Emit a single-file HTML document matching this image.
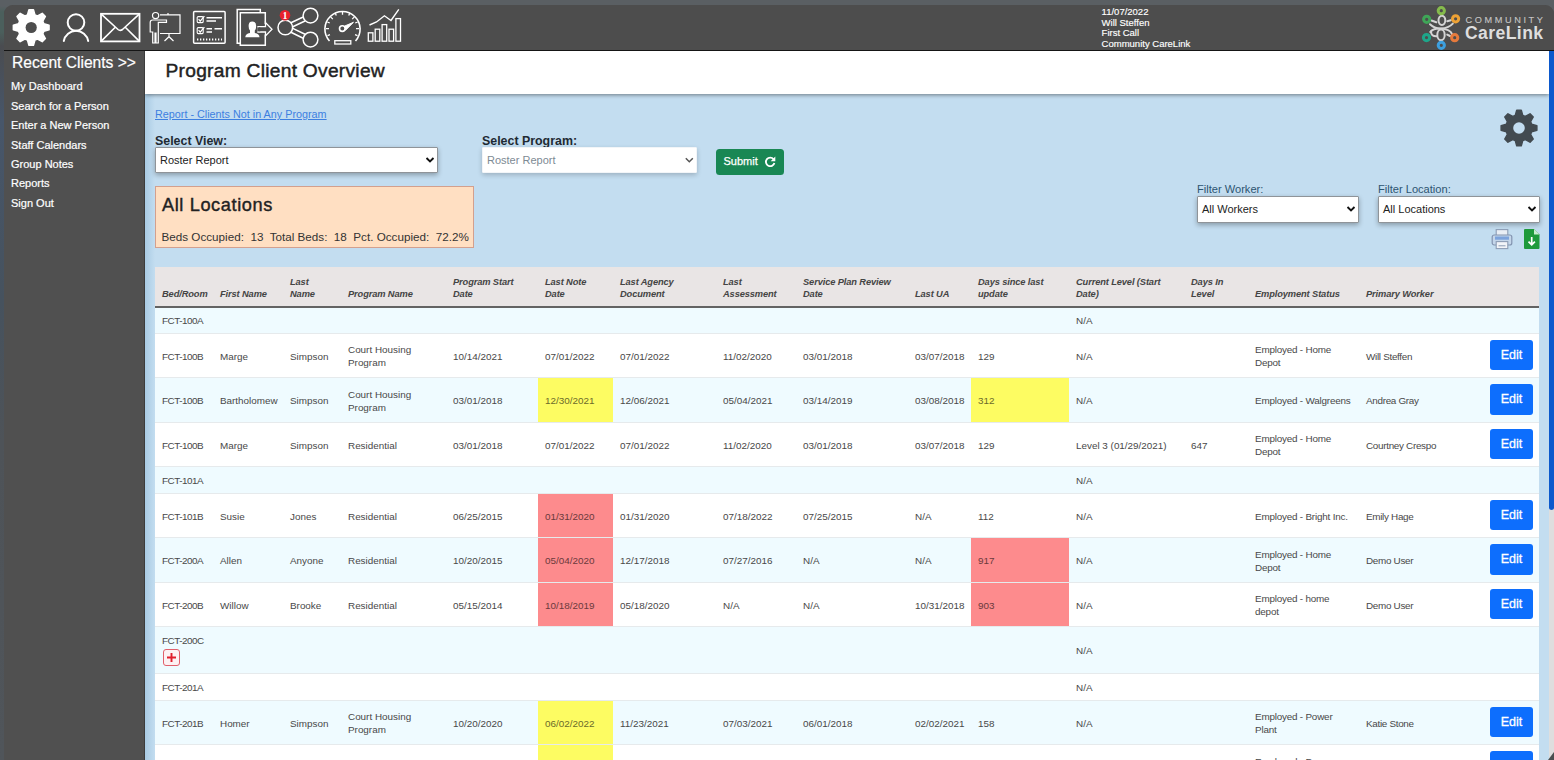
<!DOCTYPE html>
<html lang="en"><head><meta charset="utf-8"><title>Program Client Overview</title>
<style>
*{box-sizing:border-box;margin:0;padding:0}
html,body{width:1554px;height:760px;overflow:hidden}
body{background:#5a5f63;font-family:"Liberation Sans",sans-serif;position:relative}
.desk-l{position:absolute;left:0;top:0;width:6px;height:760px;background:linear-gradient(#5a5f63 0,#5a5f63 6px,#4b5f5c 12px,#4b5f5c 32px,#4a4c50 46px,#47566a 120px,#46525e 300px,#4e5358 440px,#50555a 760px)}
.win{position:absolute;left:4px;top:5px;width:1550px;height:755px;background:#4f4f4f;border-radius:9px 9px 0 0;overflow:hidden}
.topbar{position:absolute;left:0;top:0;width:1550px;height:46px;background:#4d4d4d;border-bottom:1.5px solid #151515}
.topbar svg{position:absolute;left:0;top:0}
.info{position:absolute;left:1097.6px;top:2.3px;-webkit-text-stroke:.15px #fff;color:#fff;font-size:9.5px;line-height:10.5px;white-space:nowrap}
.logo-c{position:absolute;left:1461.5px;top:9.7px;font-size:9.2px;letter-spacing:2.6px;color:#c6c6c6;-webkit-text-stroke:.1px #c6c6c6;white-space:nowrap}
.logo-l{position:absolute;left:1461px;top:18.3px;font-size:17.6px;font-weight:bold;color:#dedede;letter-spacing:.4px;white-space:nowrap}
.side{position:absolute;left:0;top:46px;width:141px;height:709px;background:#505050;border-right:1px solid #3c3c3c;color:#fff}
.side h3{-webkit-text-stroke:.2px #fff;position:absolute;left:8px;top:2.3px;font-size:15.6px;font-weight:normal;line-height:20px;white-space:nowrap}
.side ul{list-style:none;position:absolute;left:7px;top:26px}
.side li{-webkit-text-stroke:.2px #fff;position:relative;top:.4px;font-size:11px;height:19.4px;line-height:19.4px;white-space:nowrap}
.main{position:absolute;left:141px;top:46px;width:1409px;height:709px;background:#c3ddf0;overflow:hidden}
.main:before{content:"";position:absolute;left:0;top:0;width:10px;height:100%;background:linear-gradient(90deg,#a9cbe4,#c3ddf0)}
.hdr{position:absolute;left:0;top:0;width:1404px;height:43px;background:#fff;box-shadow:0 1px 4px rgba(0,0,0,.45)}
.hdr h1{letter-spacing:.27px;position:absolute;left:20.5px;top:7.5px;font-size:19.2px;font-weight:normal;-webkit-text-stroke:.45px #222;color:#222;white-space:nowrap;line-height:24px}
.sb{position:absolute;left:1404px;top:0;width:5px;height:709px;background:#dedede}
.sb i{position:absolute;left:0;top:0;width:5px;height:459px;background:#0c59cc;border-radius:0 0 3px 3px}
a.rep{position:absolute;left:10px;top:56.3px;font-size:10.8px;color:#3d7fe0;text-decoration:underline;white-space:nowrap;line-height:14px}
.lbl{position:absolute;font-size:12.4px;font-weight:bold;color:#1f2a33;white-space:nowrap;line-height:14px}
.sel{position:absolute;height:26px;background:#fff;border:1px solid #8f9499;border-radius:1px;box-shadow:0 2px 5px rgba(0,0,0,.3);font-size:11px;line-height:24px;padding-left:4px;color:#222;white-space:nowrap;text-indent:0}
.sel svg{position:absolute;right:2.5px;top:8px}
.submit{position:absolute;left:571px;top:98px;width:67.5px;height:25.5px;background:#198754;border-radius:3.5px;color:#fff;font-size:11px;line-height:25.5px;padding-left:7.5px;white-space:nowrap;-webkit-text-stroke:.25px #fff}
.submit svg{position:absolute;left:48px;top:6.5px}
.loc{position:absolute;left:10px;top:135px;width:319px;height:62px;background:#ffdfc2;border:1px solid #d3a08e}
.loc b{position:absolute;left:6px;top:6px;font-size:18.2px;font-weight:normal;-webkit-text-stroke:.4px #222;letter-spacing:.6px;color:#222;white-space:nowrap;line-height:24px}
.loc span{position:absolute;left:5.500px;top:42.5px;font-size:11.68px;color:#333;white-space:pre;line-height:14px}
.flbl{position:absolute;font-size:11.1px;color:#2d5470;white-space:nowrap;line-height:13px}
.grid{position:absolute;left:10px;top:216px;width:1384px;border-collapse:collapse;table-layout:fixed;font-size:9.9px;color:#484848;background:#fff}
.grid th{background:#e9e5e5;height:39.5px;vertical-align:bottom;text-align:left;padding:0 0 4.5px 7px;letter-spacing:-.12px;font-style:italic;font-weight:bold;color:#444;line-height:12.7px;border-bottom:2px solid #636363;font-size:9.3px;white-space:nowrap}
.grid td{padding:3.5px 0 0 7px;vertical-align:middle;line-height:12.7px;border-top:1px solid #e6eaec;white-space:nowrap;overflow:hidden}
.grid tr.s td{height:26.5px}
.grid tr.b td{height:44.5px}
.grid tr.p td{height:47px}
.grid tr.alt td{background:#effbff}
.grid td.y{background:#fdfc62 !important;color:#6b6a2a}
.grid td.r{background:#fd8b8d !important;color:#6a3a3c}
.edit{display:block;margin-top:-1px;-webkit-text-stroke:.3px #fff;width:43px;height:30.5px;background:#0d6efd;color:#fff;border-radius:3px;font-size:12.5px;line-height:30px;text-align:center}
.plus{display:block;margin:1px 0 0 1px}
.grid td:first-child{letter-spacing:-.5px}
.grid td:nth-child(15){letter-spacing:-.3px}
.grid td:nth-child(14){letter-spacing:-.2px}
.grid td:last-child{padding-top:0}
.grid tr.p td:first-child{vertical-align:top;padding-top:7.9px}

</style></head><body>
<div class="desk-l"></div>
<div class="win">
<div class="topbar">
<svg width="420" height="46" viewBox="4 5 420 46" fill="none" stroke="#fff" stroke-width="2">
<!-- gear -->
<g transform="translate(31.2,27.5)"><path d="M-3.68 -12.68 L-2.26 -17.86 L2.26 -17.86 L3.68 -12.68 L6.36 -11.57 L11.03 -14.22 L14.22 -11.03 L11.57 -6.36 L12.68 -3.68 L17.86 -2.26 L17.86 2.26 L12.68 3.68 L11.57 6.36 L14.22 11.03 L11.03 14.22 L6.36 11.57 L3.68 12.68 L2.26 17.86 L-2.26 17.86 L-3.68 12.68 L-6.36 11.57 L-11.03 14.22 L-14.22 11.03 L-11.57 6.36 L-12.68 3.68 L-17.86 2.26 L-17.86 -2.26 L-12.68 -3.68 L-11.57 -6.36 L-14.22 -11.03 L-11.03 -14.22 L-6.36 -11.57Z" fill="#fff" stroke="#fff" stroke-width="1.5" stroke-linejoin="round"/><circle r="5.6" fill="#4d4d4d" stroke="none"/></g>
<!-- person -->
<circle cx="76" cy="22.5" r="8.3"/><path d="M63.8 41 A12.4 12.4 0 0 1 88.2 41" stroke-linecap="round"/>
<!-- envelope -->
<rect x="101" y="13.8" width="38.5" height="27.6" stroke-width="1.8"/><path d="M101 13.8 L118 29.5 Q120.2 31.3 122.5 29.5 L139.5 13.8 M101 41.4 L115.5 27 M139.5 41.4 L125 27" stroke-width="1.6"/>
<!-- presenter -->
<g stroke-width="1.2"><circle cx="155.6" cy="15.600" r="3.1"/><path d="M150.2 32 V22.5 Q150.2 20 152.6 20 H166.5 V22.3 H158.3 V43 H156 V33 H155 V43 H152.7 V32Z"/><path d="M160 14.8 H180 V33.5 H160 M168 14.8 V13 M169 33.5 V37 M164.5 41 L169 36.7 L173.5 41"/></g>
<!-- checklist -->
<g stroke-width="1.5"><rect x="193.6" y="11.5" width="31.5" height="31.8" rx="1"/><path d="M197 39.5 H222" stroke-dasharray="1.3 1.7" stroke-width="2"/><rect x="197.2" y="16.6" width="6" height="6" rx="1" stroke-width="1.1"/><rect x="197.2" y="27.6" width="6" height="6" rx="1" stroke-width="1.1"/><path d="M198.6 19 L200.2 21.2 L204.4 16.2 M198.6 30 L200.2 32.2 L204.4 27.2" stroke-width="1.2"/><path d="M206.5 17.8 H222 M206.5 21 H216 M206.5 28.8 H212 M214.5 28.8 H222 M206.5 32 H212"/></g>
<!-- referral -->
<g stroke-width="1.5"><path d="M240.2 43.2 H237.2 V9.5 H260.3 V12.6"/><path d="M265.3 24 V12.8 H240.3 V45.3 H265.3 V34.5"/><path d="M258 26.6 H265.5 V22.6 L272 29.3 L265.5 36 V32 H258Z" stroke-width="1.3" fill="#4d4d4d"/><path d="M245.3 37.3 Q245.3 33.8 250 33 V30.6 Q248.6 28.8 248.6 26 Q248.6 21.6 252.4 21.6 Q256.2 21.6 256.2 26 Q256.2 28.8 254.8 30.6 V33 Q259.5 33.8 259.5 37.3Z" fill="#fff" stroke="none"/><rect x="257.3" y="27.4" width="3" height="3.9" fill="#4d4d4d" stroke="none"/></g>
<!-- share -->
<g stroke-width="1.5"><circle cx="285.3" cy="27.5" r="7.3"/><circle cx="310.5" cy="15.6" r="7.4"/><circle cx="310.5" cy="39.6" r="7.4"/><path d="M290.9 22.8 L303.2 17 M292.8 26.7 L305 21 M292.8 28.4 L305 34.2 M290.9 32.3 L303.2 38.2"/><circle cx="285" cy="15.3" r="5.3" fill="#e8212b" stroke="none"/></g>
<text x="282.6" y="19" font-family="Liberation Serif,serif" font-size="10" font-weight="bold" fill="#fff" stroke="none">1</text>
<!-- gauge -->
<g stroke-width="1.5"><path d="M329.5 41 A17.6 17.6 0 1 1 355.5 41" stroke-width="1.6"/><rect x="334.8" y="40.7" width="16" height="3.3" stroke-width="1.3"/><circle cx="342.3" cy="28.6" r="2.8" stroke-width="1.6"/><path d="M344.3 26.2 L353.5 22.3 L345.4 30.4" fill="#fff" stroke-width="1"/><path d="M342.5 11.5 V14.8 M326 28.6 H329 M356 28.6 H359 M330.6 16.9 L332.8 19.1 M354.4 16.9 L352.2 19.1 M335.3 13.2 L336.3 15.6 M349.7 13.2 L348.7 15.6 M327.3 22 L329.8 23 M357.7 22 L355.2 23 M327.5 35.6 L330 34.6 M357.5 35.6 L355 34.6" stroke-width="1.3"/></g>
<!-- chart -->
<g stroke-width="1.3"><rect x="368.3" y="32.8" width="4.6" height="8.4"/><rect x="375.2" y="29.2" width="4.6" height="12"/><rect x="382.1" y="24.6" width="4.6" height="16.6"/><rect x="389" y="29.2" width="4.6" height="12"/><rect x="395.9" y="18.6" width="4.6" height="22.6"/><path d="M369.5 25 L376.5 22 L384.4 15.8 L391 20.5 L398.8 9.3" stroke-width="1.4"/></g>
</svg>
<div class="info">11/07/2022<br>Will Steffen<br>First Call<br>Community CareLink</div>
<svg width="44" height="46" viewBox="1420 5 44 46" style="left:1416px" fill="none">
<g stroke="#d4d4d4" stroke-width="2" stroke-linecap="round"><ellipse cx="1441.9" cy="20.3" rx="3.4" ry="4.6"/><ellipse cx="1441" cy="34.9" rx="3.7" ry="5.3"/><path d="M1430 24.300 Q1435 29 1441 28.600 Q1448.500 28.200 1452.800 23.600"/><path d="M1431.500 20.500 L1436.300 22.300 M1447.300 21.300 L1450.800 20.300"/><path d="M1430.300 32 Q1433.500 28.300 1440 28.600 Q1450.500 29.300 1452.200 34.400"/><path d="M1431 31.500 Q1431 36.500 1436.800 36.200 M1447.200 34.600 L1450 36"/></g>
<g stroke-width="3"><circle cx="1441.3" cy="10.7" r="3.1" stroke="#85bb4c"/><circle cx="1426.7" cy="19.3" r="3.1" stroke="#3fa557"/><circle cx="1455.600" cy="18.800" r="3.1" stroke="#eea235"/><circle cx="1426.500" cy="37.600" r="3.1" stroke="#1ea68a"/><circle cx="1454.700" cy="37.700" r="3.1" stroke="#e67a3c"/><circle cx="1441.300" cy="45.300" r="3.1" stroke="#3d9fde"/></g>
</svg>
<div class="logo-c">COMMUNITY</div>
<div class="logo-l">CareLink</div>
</div>
<div class="side">
<h3>Recent Clients &gt;&gt;</h3>
<ul><li>My Dashboard</li><li>Search for a Person</li><li>Enter a New Person</li><li>Staff Calendars</li><li>Group Notes</li><li>Reports</li><li>Sign Out</li></ul>
</div>
<div class="main">
<a class="rep">Report - Clients Not in Any Program</a>
<div class="lbl" style="left:10px;top:82.5px">Select View:</div>
<div class="sel" style="left:10px;top:96px;width:283px">Roster Report<svg width="10" height="8" viewBox="0 0 10 8"><path d="M1.5 2 L5 5.500 L8.5 2" fill="none" stroke="#111" stroke-width="1.9"/></svg></div>
<div class="lbl" style="left:337px;top:82.5px">Select Program:</div>
<div class="sel" style="left:337px;top:96px;width:215px;color:#7d8a94;border-color:#f2f5f8;box-shadow:0 2px 5px rgba(0,0,0,.2)">Roster Report<svg width="10" height="8" viewBox="0 0 10 8"><path d="M1.8 2.2 L5.300 5.700 L8.8 2.2" fill="none" stroke="#555" stroke-width="1.5"/></svg></div>
<div class="submit">Submit<svg width="12" height="12" viewBox="0 0 12 12"><path d="M9.6 3.2 A4.3 4.3 0 1 0 10.4 7" fill="none" stroke="#fff" stroke-width="1.8"/><path d="M11.3 0.6 V5.2 H6.7Z" fill="#fff"/></svg></div>
<div class="loc"><b>All Locations</b><span>Beds Occupied:  13  Total Beds:  18  Pct. Occupied:  72.2%</span></div>
<svg width="40" height="40" viewBox="-20 -20 40 40" style="position:absolute;left:1354.4px;top:56.5px"><path d="M-3.68 -12.68 L-2.26 -17.86 L2.26 -17.86 L3.68 -12.68 L6.36 -11.57 L11.03 -14.22 L14.22 -11.03 L11.57 -6.36 L12.68 -3.68 L17.86 -2.26 L17.86 2.26 L12.68 3.68 L11.57 6.36 L14.22 11.03 L11.03 14.22 L6.36 11.57 L3.68 12.68 L2.26 17.86 L-2.26 17.86 L-3.68 12.68 L-6.36 11.57 L-11.03 14.22 L-14.22 11.03 L-11.57 6.36 L-12.68 3.68 L-17.86 2.26 L-17.86 -2.26 L-12.68 -3.68 L-11.57 -6.36 L-14.22 -11.03 L-11.03 -14.22 L-6.36 -11.57Z" fill="#424a50" stroke="#424a50" stroke-width="1.5" stroke-linejoin="round"/><circle r="5.8" fill="#c3ddf0"/></svg>
<div class="flbl" style="left:1052px;top:131.500px">Filter Worker:</div>
<div class="sel" style="left:1052px;top:144.5px;width:162px;height:27px;line-height:25px">All Workers<svg width="10" height="8" viewBox="0 0 10 8"><path d="M1.5 2 L5 5.500 L8.5 2" fill="none" stroke="#111" stroke-width="1.9"/></svg></div>
<div class="flbl" style="left:1233px;top:131.500px">Filter Location:</div>
<div class="sel" style="left:1233px;top:144.5px;width:162px;height:27px;line-height:25px">All Locations<svg width="10" height="8" viewBox="0 0 10 8"><path d="M1.5 2 L5 5.500 L8.5 2" fill="none" stroke="#111" stroke-width="1.9"/></svg></div>
<svg width="22" height="22" viewBox="0 0 22 22" style="position:absolute;left:1346px;top:176.5px" fill="none"><rect x="5.2" y="1.6" width="11.6" height="6.5" fill="#e9eef5" stroke="#8d9db5" stroke-width="1.1"/><rect x="1.2" y="7" width="19.6" height="10" rx="2" fill="#c4d6ea" stroke="#8394b0" stroke-width="1.2"/><rect x="4" y="8.5" width="14" height="3.2" fill="#7da3dc"/><rect x="5.2" y="13.6" width="11.6" height="7" fill="#f2f4f8" stroke="#8d9db5" stroke-width="1.1"/><path d="M7.5 17.8 H14.5" stroke="#8d9db5" stroke-width="1"/></svg>
<svg width="18" height="22" viewBox="0 0 18 22" style="position:absolute;left:1378px;top:177px"><path d="M1 2 Q1 1 2 1 H11 L16.5 6.5 V20 Q16.5 21 15.500 21 H2 Q1 21 1 20Z" fill="#1e9a3c"/><path d="M11 1 V6.5 H16.5Z" fill="#c8ecd0"/><path d="M8.7 9 V16.5 M5.5 13.6 L8.7 16.9 L11.900 13.6" stroke="#fff" stroke-width="1.7" fill="none"/></svg>
<table class="grid"><colgroup>
<col style="width:58px">
<col style="width:70px">
<col style="width:58px">
<col style="width:105px">
<col style="width:92px">
<col style="width:75px">
<col style="width:103px">
<col style="width:80px">
<col style="width:112px">
<col style="width:63px">
<col style="width:98px">
<col style="width:115px">
<col style="width:64px">
<col style="width:111px">
<col style="width:124px">
<col style="width:56px">
</colgroup><thead><tr>
<th>Bed/Room</th>
<th>First Name</th>
<th>Last<br>Name</th>
<th>Program Name</th>
<th>Program Start<br>Date</th>
<th>Last Note<br>Date</th>
<th>Last Agency<br>Document</th>
<th>Last<br>Assessment</th>
<th>Service Plan Review<br>Date</th>
<th>Last UA</th>
<th>Days since last<br>update</th>
<th>Current Level (Start<br>Date)</th>
<th>Days In<br>Level</th>
<th>Employment Status</th>
<th>Primary Worker</th>
<th></th>
</tr></thead><tbody>
<tr class="s alt">
<td>FCT-100A</td>
<td></td>
<td></td>
<td></td>
<td></td>
<td></td>
<td></td>
<td></td>
<td></td>
<td></td>
<td></td>
<td>N/A</td>
<td></td>
<td></td>
<td></td>
<td></td>
</tr>
<tr class="b">
<td>FCT-100B</td>
<td>Marge</td>
<td>Simpson</td>
<td>Court Housing<br>Program</td>
<td>10/14/2021</td>
<td>07/01/2022</td>
<td>07/01/2022</td>
<td>11/02/2020</td>
<td>03/01/2018</td>
<td>03/07/2018</td>
<td>129</td>
<td>N/A</td>
<td></td>
<td>Employed - Home<br>Depot</td>
<td>Will Steffen</td>
<td><span class="edit">Edit</span></td>
</tr>
<tr class="b alt">
<td>FCT-100B</td>
<td>Bartholomew</td>
<td>Simpson</td>
<td>Court Housing<br>Program</td>
<td>03/01/2018</td>
<td class="y">12/30/2021</td>
<td>12/06/2021</td>
<td>05/04/2021</td>
<td>03/14/2019</td>
<td>03/08/2018</td>
<td class="y">312</td>
<td>N/A</td>
<td></td>
<td>Employed - Walgreens</td>
<td>Andrea Gray</td>
<td><span class="edit">Edit</span></td>
</tr>
<tr class="b">
<td>FCT-100B</td>
<td>Marge</td>
<td>Simpson</td>
<td>Residential</td>
<td>03/01/2018</td>
<td>07/01/2022</td>
<td>07/01/2022</td>
<td>11/02/2020</td>
<td>03/01/2018</td>
<td>03/07/2018</td>
<td>129</td>
<td>Level 3 (01/29/2021)</td>
<td>647</td>
<td>Employed - Home<br>Depot</td>
<td>Courtney Crespo</td>
<td><span class="edit">Edit</span></td>
</tr>
<tr class="s alt">
<td>FCT-101A</td>
<td></td>
<td></td>
<td></td>
<td></td>
<td></td>
<td></td>
<td></td>
<td></td>
<td></td>
<td></td>
<td>N/A</td>
<td></td>
<td></td>
<td></td>
<td></td>
</tr>
<tr class="b">
<td>FCT-101B</td>
<td>Susie</td>
<td>Jones</td>
<td>Residential</td>
<td>06/25/2015</td>
<td class="r">01/31/2020</td>
<td>01/31/2020</td>
<td>07/18/2022</td>
<td>07/25/2015</td>
<td>N/A</td>
<td>112</td>
<td>N/A</td>
<td></td>
<td>Employed - Bright Inc.</td>
<td>Emily Hage</td>
<td><span class="edit">Edit</span></td>
</tr>
<tr class="b alt">
<td>FCT-200A</td>
<td>Allen</td>
<td>Anyone</td>
<td>Residential</td>
<td>10/20/2015</td>
<td class="r">05/04/2020</td>
<td>12/17/2018</td>
<td>07/27/2016</td>
<td>N/A</td>
<td>N/A</td>
<td class="r">917</td>
<td>N/A</td>
<td></td>
<td>Employed - Home<br>Depot</td>
<td>Demo User</td>
<td><span class="edit">Edit</span></td>
</tr>
<tr class="b">
<td>FCT-200B</td>
<td>Willow</td>
<td>Brooke</td>
<td>Residential</td>
<td>05/15/2014</td>
<td class="r">10/18/2019</td>
<td>05/18/2020</td>
<td>N/A</td>
<td>N/A</td>
<td>10/31/2018</td>
<td class="r">903</td>
<td>N/A</td>
<td></td>
<td>Employed - home<br>depot</td>
<td>Demo User</td>
<td><span class="edit">Edit</span></td>
</tr>
<tr class="p alt">
<td>FCT-200C<svg class=plus width=17 height=17 viewBox="0 0 17 17"><rect x=.5 y=.5 width=16 height=16 rx=2.5 fill="#fdf1f3" stroke="#e0606c"/><path d="M8.5 4 V13 M4 8.5 H13" stroke="#e01f2d" stroke-width=1.9 fill=none /></svg></td>
<td></td>
<td></td>
<td></td>
<td></td>
<td></td>
<td></td>
<td></td>
<td></td>
<td></td>
<td></td>
<td>N/A</td>
<td></td>
<td></td>
<td></td>
<td></td>
</tr>
<tr class="s">
<td>FCT-201A</td>
<td></td>
<td></td>
<td></td>
<td></td>
<td></td>
<td></td>
<td></td>
<td></td>
<td></td>
<td></td>
<td>N/A</td>
<td></td>
<td></td>
<td></td>
<td></td>
</tr>
<tr class="b alt">
<td>FCT-201B</td>
<td>Homer</td>
<td>Simpson</td>
<td>Court Housing<br>Program</td>
<td>10/20/2020</td>
<td class="y">06/02/2022</td>
<td>11/23/2021</td>
<td>07/03/2021</td>
<td>06/01/2018</td>
<td>02/02/2021</td>
<td>158</td>
<td>N/A</td>
<td></td>
<td>Employed - Power<br>Plant</td>
<td>Katie Stone</td>
<td><span class="edit">Edit</span></td>
</tr>
<tr class="b">
<td></td>
<td></td>
<td></td>
<td></td>
<td></td>
<td class="y"></td>
<td></td>
<td></td>
<td></td>
<td></td>
<td></td>
<td></td>
<td></td>
<td>Employed - Power<br>Plant</td>
<td></td>
<td><span class="edit">Edit</span></td>
</tr>
</tbody></table>
<div class="hdr"><h1>Program Client Overview</h1></div>
<div class="sb"><i></i></div>
</div>
<div style="position:absolute;right:0;bottom:0;width:0;height:0;border-left:6px solid transparent;border-bottom:8px solid #4a4f50"></div>
</div>
</body></html>
